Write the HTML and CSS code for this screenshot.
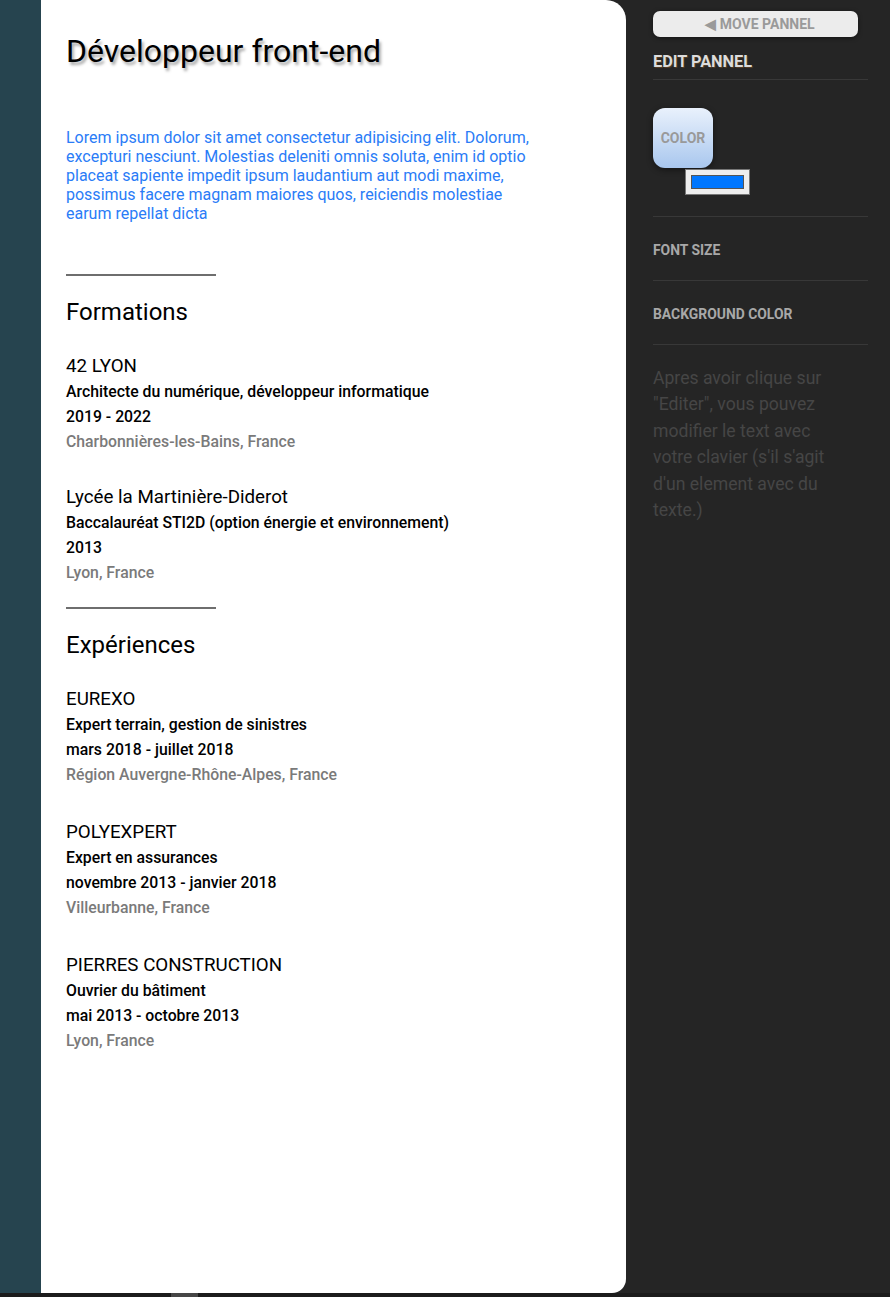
FILE: index.html
```html
<!DOCTYPE html>
<html lang="fr">
<head>
<meta charset="utf-8">
<title>CV</title>
<link rel="stylesheet" href="styles.css">
</head>
<body>
<div class="page">
  <div class="strip"></div>
  <main class="card">
    <h1 class="title">Développeur front-end</h1>
    <p class="intro">Lorem ipsum dolor sit amet consectetur adipisicing elit. Dolorum, excepturi nesciunt. Molestias deleniti omnis soluta, enim id optio placeat sapiente impedit ipsum laudantium aut modi maxime, possimus facere magnam maiores quos, reiciendis molestiae earum repellat dicta</p>

    <section class="section">
      <hr class="rule">
      <h2 class="section-title">Formations</h2>
      <div class="entry">
        <h3 class="entry-title">42 LYON</h3>
        <p class="entry-line">Architecte du numérique, développeur informatique</p>
        <p class="entry-line">2019 - 2022</p>
        <p class="entry-loc">Charbonnières-les-Bains, France</p>
      </div>
      <div class="entry">
        <h3 class="entry-title">Lycée la Martinière-Diderot</h3>
        <p class="entry-line">Baccalauréat STI2D (option énergie et environnement)</p>
        <p class="entry-line">2013</p>
        <p class="entry-loc">Lyon, France</p>
      </div>
    </section>

    <section class="section section-exp">
      <hr class="rule">
      <h2 class="section-title">Expériences</h2>
      <div class="entry">
        <h3 class="entry-title">EUREXO</h3>
        <p class="entry-line">Expert terrain, gestion de sinistres</p>
        <p class="entry-line">mars 2018 - juillet 2018</p>
        <p class="entry-loc">Région Auvergne-Rhône-Alpes, France</p>
      </div>
      <div class="entry">
        <h3 class="entry-title">POLYEXPERT</h3>
        <p class="entry-line">Expert en assurances</p>
        <p class="entry-line">novembre 2013 - janvier 2018</p>
        <p class="entry-loc">Villeurbanne, France</p>
      </div>
      <div class="entry">
        <h3 class="entry-title">PIERRES CONSTRUCTION</h3>
        <p class="entry-line">Ouvrier du bâtiment</p>
        <p class="entry-line">mai 2013 - octobre 2013</p>
        <p class="entry-loc">Lyon, France</p>
      </div>
    </section>
  </main>
  <aside class="panel">
    <button class="move-btn">◀ MOVE PANNEL</button>
    <h2 class="panel-title">EDIT PANNEL</h2>
    <div class="panel-block color-block">
      <div class="color-btn">COLOR</div>
      <div class="color-input"><span class="swatch"></span></div>
    </div>
    <div class="panel-block option">FONT SIZE</div>
    <div class="panel-block option">BACKGROUND COLOR</div>
    <p class="help">Apres avoir clique sur "Editer", vous pouvez modifier le text avec votre clavier (s'il s'agit d'un element avec du texte.)</p>
  </aside>
</div>
<div class="bottom-bar"><span class="thumb"></span></div>
</body>
</html>
```

FILE: styles.css
```css
* { box-sizing: border-box; }
html, body { margin: 0; padding: 0; }
body {
  background: #252525;
  font-family: Roboto, "Liberation Sans", Arial, sans-serif;
  overflow: hidden;
}
.page {
  display: flex;
  height: 1293px;
}
.strip {
  width: 41px;
  flex: none;
  background: #26444f;
}
.card {
  width: 585px;
  flex: none;
  background: #ffffff;
  border-radius: 0 20px 14px 0;
  padding: 32px 25px 0 25px;
}
.title {
  margin: 0;
  font-size: 32px;
  font-weight: 400;
  line-height: 38px;
  color: #000;
  text-shadow: 2px 3px 3px rgba(0, 0, 0, 0.35);
}
.intro {
  margin: 58px 0 0 0;
  width: 475px;
  font-size: 16px;
  line-height: 19px;
  color: #2a7cf7;
}
.rule {
  margin: 51px 0 0 0;
  width: 150px;
  border: 0;
  height: 2px;
  background: #6e6e6e;
}
.section-exp .rule { margin-top: 22px; }
.section-title {
  margin: 22px 0 0 0;
  font-size: 24px;
  font-weight: 400;
  line-height: 28px;
  color: #000;
}
.entry { margin-top: 28px; }
.entry + .entry { margin-top: 31px; }
.section-exp .entry + .entry { margin-top: 33px; }
.entry-title {
  margin: 0 0 2px 0;
  font-size: 18.75px;
  font-weight: 400;
  line-height: 24px;
  color: #000;
}
.entry-line, .entry-loc {
  margin: 1px 0 0 0;
  font-size: 15.8px;
  font-weight: 500;
  line-height: 24px;
  color: #000;
}
.entry-loc { color: #7a7a7a; }

.panel {
  flex: 1;
  padding: 11px 22px 0 27px;
}
.move-btn {
  display: block;
  width: 205px;
  height: 26px;
  border: 0;
  border-radius: 7px;
  background: #ececec;
  color: #9a9a9a;
  font-family: inherit;
  font-size: 14px;
  font-weight: 700;
  padding: 0 0 0 9px;
  box-shadow: 0 1px 4px rgba(0, 0, 0, 0.5);
}
.panel-title {
  margin: 16px 0 0 0;
  padding-bottom: 8px;
  font-size: 16.3px;
  font-weight: 700;
  line-height: 18px;
  color: #dcdcdc;
  text-shadow: 1px 1px 1px rgba(120, 80, 40, 0.6);
  border-bottom: 1px solid #383838;
}
.panel-block {
  border-bottom: 1px solid #383838;
}
.color-block {
  padding: 28px 0 21px 0;
}
.color-btn {
  width: 60px;
  height: 60px;
  border-radius: 12px;
  background: linear-gradient(#e9f1fc, #a9c7ee);
  color: #999;
  font-size: 14px;
  font-weight: 700;
  display: flex;
  align-items: center;
  justify-content: center;
  box-shadow: 0 2px 6px rgba(0, 0, 0, 0.45);
}
.color-input {
  margin: 1px 0 0 32px;
  width: 65px;
  height: 26px;
  background: #eeeeee;
  border: 1px solid #777;
  padding: 5px;
}
.swatch {
  display: block;
  width: 100%;
  height: 100%;
  background: #0077ff;
  border: 1px solid #555;
}
.option {
  padding: 25px 0 22px 0;
  font-size: 13.9px;
  font-weight: 700;
  line-height: 16px;
  color: #a8a8a8;
}
.help {
  margin: 20px 0 0 0;
  width: 192px;
  font-size: 17.6px;
  line-height: 26.4px;
  color: #464646;
}
.bottom-bar {
  height: 4px;
  background: #1c1c1c;
  padding-left: 171px;
}
.thumb {
  display: block;
  width: 27px;
  height: 4px;
  background: #464646;
}
```
